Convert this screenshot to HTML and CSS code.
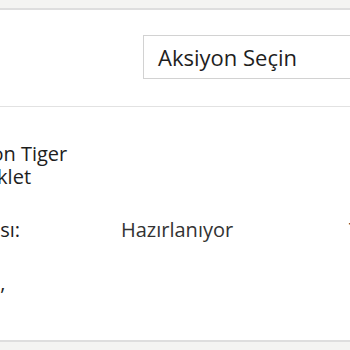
FILE: index.html
```html
<!DOCTYPE html>
<html lang="tr">
<head>
    <meta charset="UTF-8">
    <meta name="viewport" content="width=device-width, initial-scale=1.0">
    <title>Sipariş Detayı</title>
    <link rel="stylesheet" href="styles.css">
</head>
<body>

    <div class="panel">
        <div class="panel-head">
            <div class="action-select">Aksiyon Seçin</div>
        </div>

        <div class="panel-body">
            <div class="info-row">
                <div class="info-label">Salcano Carbon Tiger<br>Şehir Dağ Bisiklet</div>
            </div>
            <div class="info-row">
                <div class="info-label">Sipariş Aşaması:</div>
                <div class="info-value">Hazırlanıyor</div>
                <div class="info-extra">Tahmini Teslim</div>
            </div>
            <div class="info-row">
                <div class="info-label">Kadıköy, Sivas,</div>
            </div>
        </div>
    </div>

</body>
</html>
```

FILE: styles.css
```css
* {
    margin: 0;
    padding: 0;
    box-sizing: border-box;
}

body {
    font-family: "Open Sans", Arial, sans-serif;
    background-color: #f4f4f2;
    color: #222;
    overflow: hidden;
    width: 350px;
    height: 350px;
}

.panel {
    margin-top: 8px;
    background-color: #fff;
    border-top: 2px solid #dedede;
    border-bottom: 2px solid #dedede;
    height: 334px;
}

.panel-head {
    display: flex;
    padding: 25px 0 0 143px;
    height: 97px;
    border-bottom: 1px solid #e2e2e2;
}

.action-select {
    flex: none;
    width: 240px;
    height: 44px;
    border: 1px solid #d2d2d2;
    padding-left: 14px;
    font-size: 22px;
    line-height: 42px;
    color: #1e1e1e;
}

.panel-body {
    margin-left: -130px;
    padding-top: 35px;
}

.info-row {
    display: grid;
    grid-template-columns: 251px 228px auto;
    font-size: 20px;
    line-height: 23px;
    color: #1e1e1e;
}

.info-row + .info-row {
    margin-top: 30px;
}

.info-value,
.info-extra {
    color: #333;
    white-space: nowrap;
}
```
